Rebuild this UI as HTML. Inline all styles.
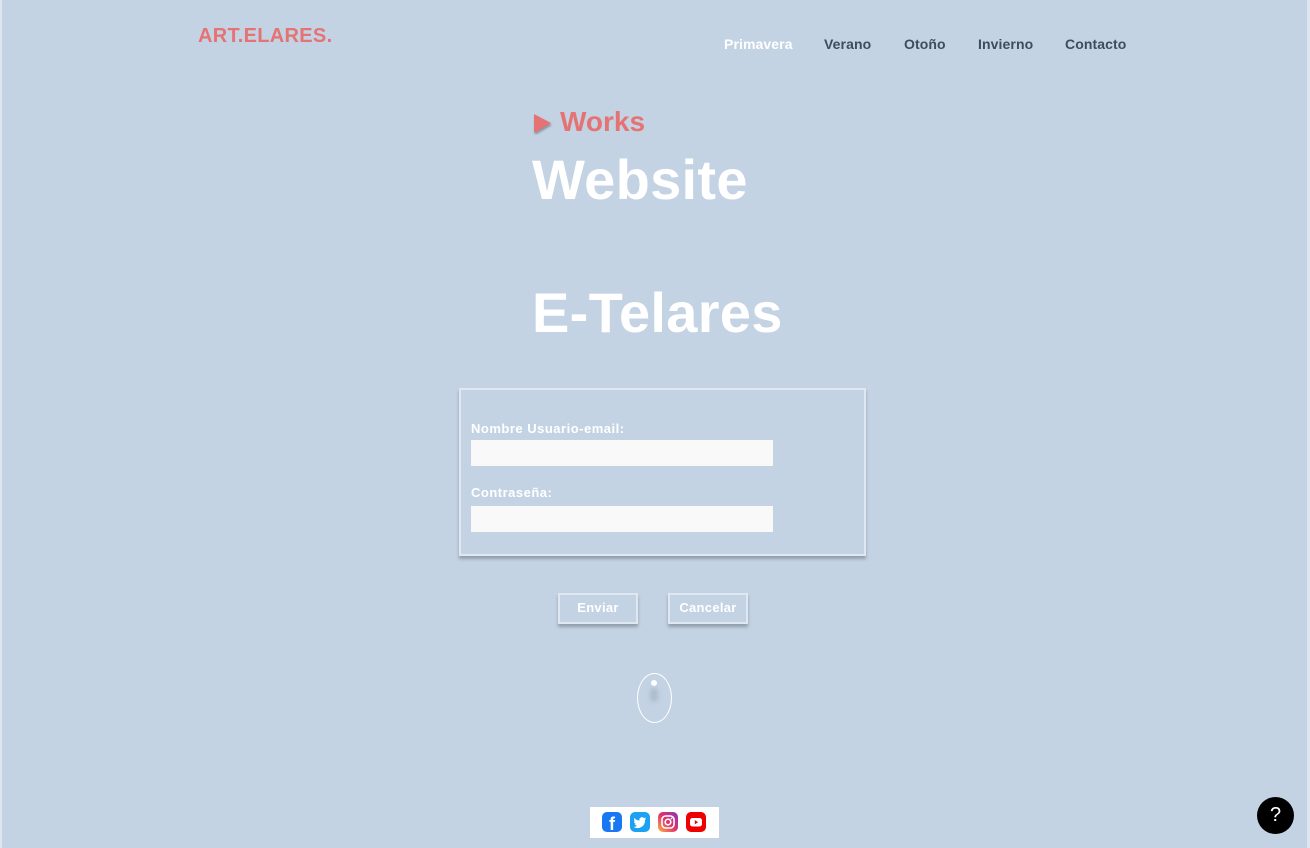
<!DOCTYPE html>
<html><head><meta charset="utf-8"><style>
*{margin:0;padding:0;box-sizing:border-box}
body{width:1310px;height:848px;background:#c3d3e3;font-family:"Liberation Sans",sans-serif;position:relative;overflow:hidden}
.a{position:absolute}
.logo{left:198px;top:25px;color:#e57373;font-weight:bold;font-size:20px;letter-spacing:0.3px}
.nav{top:36px;font-weight:bold;font-size:14px;color:#3e4c5e;letter-spacing:0.1px}
.works{left:560px;top:106px;color:#e57373;font-weight:bold;font-size:28px}
.big{left:532px;color:#fff;font-weight:bold;font-size:56px;letter-spacing:0.3px}
.box{left:459px;top:388px;width:407px;height:168px;border:2px solid #dfe8f0;box-shadow:0 3px 3px rgba(0,0,0,.25)}
.lbl{left:471px;color:#fff;font-weight:bold;font-size:13px;letter-spacing:0.5px}
.inp{left:471px;width:302px;height:26px;background:#f9f9f9}
.btn{top:593px;width:80px;height:31px;border:2px solid #dfe8f0;box-shadow:0 3px 3px rgba(0,0,0,.25);color:#fff;font-weight:bold;font-size:13px;text-align:center;line-height:26px;letter-spacing:0.3px}
.ic{top:812px;width:20px;height:20px;border-radius:5px}
</style></head><body>
<div class="a" style="left:0;top:0;width:2px;height:848px;background:#dde6ef"></div>
<div class="a logo">ART.ELARES.</div>
<div class="a nav" style="left:724px;color:#fff">Primavera</div>
<div class="a nav" style="left:824px">Verano</div>
<div class="a nav" style="left:904px">Otoño</div>
<div class="a nav" style="left:978px">Invierno</div>
<div class="a nav" style="left:1065px">Contacto</div>
<svg class="a" style="left:533px;top:113px" width="20" height="22"><polygon points="1,1 18,10 1,20" fill="#e57373" style="filter:drop-shadow(1px 2px 1px rgba(0,0,0,.3))"/></svg>
<div class="a works">Works</div>
<div class="a big" style="top:147px">Website</div>
<div class="a big" style="top:280px">E-Telares</div>
<div class="a box"></div>
<div class="a lbl" style="top:421px">Nombre Usuario-email:</div>
<div class="a inp" style="top:440px"></div>
<div class="a lbl" style="top:485px">Contraseña:</div>
<div class="a inp" style="top:506px"></div>
<div class="a btn" style="left:558px">Enviar</div>
<div class="a btn" style="left:668px">Cancelar</div>
<div class="a" style="left:637px;top:673px;width:35px;height:50px;border:1.5px solid #fff;border-radius:50%"></div>
<div class="a" style="left:651px;top:680px;width:6px;height:6px;background:#fff;border-radius:50%"></div>
<div class="a" style="left:650px;top:688px;width:8px;height:14px;background:rgba(150,165,185,.5);border-radius:4px;filter:blur(2px)"></div>
<div class="a" style="left:590px;top:807px;width:129px;height:31px;background:#fff"></div>
<div class="a ic" style="left:602px;background:#1877f2;color:#fff;font-weight:bold;font-size:18px;text-align:center;line-height:24px;overflow:hidden">f</div>
<svg class="a ic" style="left:630px;background:#1da1f2" viewBox="0 0 20 20"><path d="M16 6.5c-.5.2-1 .4-1.5.4.6-.3 1-.9 1.2-1.5-.5.3-1.1.5-1.7.7a2.6 2.6 0 0 0-4.5 2.4C7.300 8.400 5.500 7.400 4.300 6c-.7 1.200-.3 2.700.8 3.500-.4 0-.8-.1-1.200-.3 0 1.300.9 2.400 2.100 2.600-.4.1-.8.1-1.200.1.3 1 1.300 1.800 2.400 1.800A5.300 5.300 0 0 1 3.500 14.800 7.400 7.400 0 0 0 15 8.300v-.3c.4-.4.8-.9 1-1.500z" fill="#fff"/></svg>
<svg class="a ic" style="left:658px;background:linear-gradient(45deg,#fdb347,#e1306c 50%,#833ab4)" viewBox="0 0 20 20"><rect x="4" y="4" width="12" height="12" rx="3.5" fill="none" stroke="#fff" stroke-width="1.6"/><circle cx="10" cy="10" r="2.8" fill="none" stroke="#fff" stroke-width="1.6"/><circle cx="13.5" cy="6.5" r=".9" fill="#fff"/></svg>
<svg class="a ic" style="left:686px;background:#e00" viewBox="0 0 20 20"><rect x="4" y="6" width="12" height="8.5" rx="2.5" fill="#fff"/><polygon points="8.800,8 12,10.200 8.800,12.400" fill="#e00"/></svg>
<div class="a" style="left:1257px;top:797px;width:37px;height:37px;border-radius:50%;background:#000;color:#fff;font-size:20px;text-align:center;line-height:36px">?</div>
<div class="a" style="left:1307px;top:0;width:3px;height:848px;background:#dde6ef"></div>
</body></html>
